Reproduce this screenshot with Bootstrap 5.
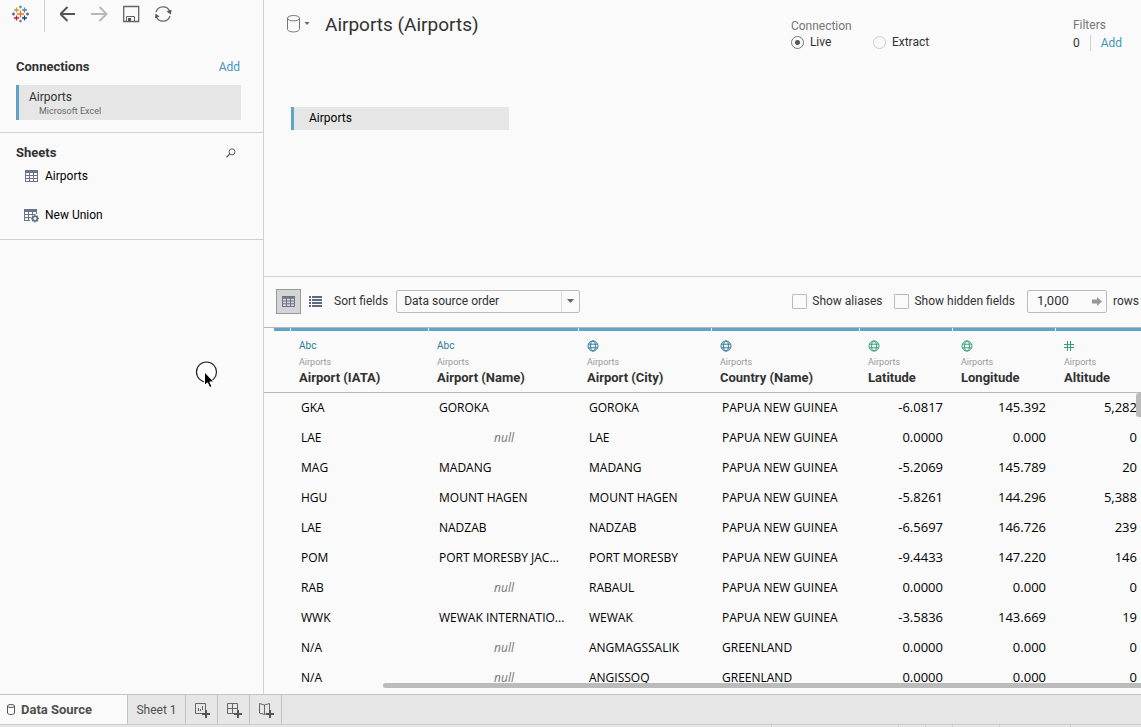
<!DOCTYPE html>
<html lang="en">
<head>
<meta charset="utf-8">
<meta name="viewport" content="width=device-width, initial-scale=1">
<title>Airports (Airports) - Data Source</title>
<link href="https://cdn.jsdelivr.net/npm/bootstrap@5.3.0/dist/css/bootstrap.min.css" rel="stylesheet">
<style>
  :root { --line: #d0d0d0; --accent: #5fa4c7; --ink: #323232; }
  body { font-family: Roboto, "Liberation Sans", sans-serif; font-size: 12px; line-height: 16px; color: var(--ink); background: #fafafa; }
  svg { display: block; flex: none; }
  a { color: #4996b8; text-decoration: none; }
  h1 { font-size: 19px; line-height: 24px; font-weight: 400; margin-left: 15px; }
  h2 { font-size: 13px; line-height: 16px; font-weight: 700; }
  .plain-btn { border: 0; padding: 0; background: none; color: #5c5c5c; line-height: 16px; }
  .rule { border-color: var(--line) !important; }

  .side { width: 264px; flex: none; border-right: 1px solid var(--line); }
  .side-tools { height: 32px; padding-left: 12px; gap: 15px; }
  .brand { width: 33px; height: 32px; border-right: 1px solid var(--line); padding-top: 5px; }
  .side-tools .plain-btn { padding-top: 5px; }
  .side-conn { padding: 27px 22px 12px 16px; }
  .conn-title { margin-bottom: 10px; padding-right: 1px; }
  .conn { border: 0; border-left: 3px solid var(--accent); background: #e6e6e6; height: 35px; padding: 4px 10px; text-align: left; font-size: 12px; color: var(--ink); }
  .conn-kind { font-size: 9px; line-height: 12px; color: #666; padding-left: 10px; }
  .side-sheets { padding: 12px 27px 16px 16px; }
  .sheet-list { gap: 23px; margin-top: 7px; }
  .sheet-item { color: #000; gap: 7px; font-size: 12px; padding: 0 0 0 9px; }

  .canvas-pane { height: 277px; flex: none; }
  .canvas-head { padding: 13px 19px 0 22px; }
  .source-btn { margin-top: 2px; }
  .sheet-pill { width: 218px; height: 23px; margin: 56px 0 0 27px; border-left: 3px solid var(--accent); background: #e6e6e6; padding: 3px 15px; color: #000; }
  .opt { margin-top: 5px; }
  .opt legend { font-size: 12px; line-height: 16px; }
  .opt-row > div { gap: 6px; min-width: 82px; }
  .opt .form-check-input { width: 13px; height: 13px; margin: 0; background-color: #fafafa; border-color: #ccc; box-shadow: none; }
  .opt .form-check-input:checked { border-color: #777; background-image: radial-gradient(circle, #555 2px, transparent 3px); }
  .soft { color: #767676; }
  .filters { margin-left: 118px; padding-top: 4px; }
  .filter-row { padding-top: 2px; }
  .filter-add { border-left: 1px solid var(--line); padding-left: 10px; margin-left: 10px; }

  .grid-tools { height: 51px; flex: none; padding: 0 2px 2px 12px; border-bottom: 1px solid #b8b8b8; }
  .view-btn { width: 25px; height: 25px; display: grid; place-items: center; margin-right: 8px; }
  .view-btn.active { border: 1px solid #999; background: #d4d4d4; }
  .sort-label { margin: 0 8px 0 12px; }
  .sorter { width: 184px; height: 23px; font-size: 12px; line-height: 16px; color: var(--ink); padding: 2px 24px 2px 7px; border: 1px solid #bbb; border-radius: 2px;
    background: linear-gradient(#ddd, #ddd) right 17px top / 1px 100% no-repeat,
      url("data:image/svg+xml,%3Csvg xmlns='http://www.w3.org/2000/svg' viewBox='0 0 7 4'%3E%3Cpath d='M0 0h7L3.5 4z' fill='%23666'/%3E%3C/svg%3E") right 5px center / 7px 4px no-repeat; }
  .tick { gap: 5px; margin-right: 12px; }
  .tick .form-check-input { width: 15px; height: 15px; margin: 0; border: 1px solid #bbb; border-radius: 1px; background-color: #fafafa; }
  .row-count { width: 80px; height: 23px; border: 1px solid #bbb; border-radius: 2px; }
  .row-count input { width: 54px; border: 0; padding: 0 0 0 9px; background: none; font-size: 13px; line-height: 16px; color: var(--ink); }
  .rows-label { margin-left: 6px; }

  .min-0 { min-width: 0; min-height: 0; }
  .airports { width: 873px; margin: 0 0 0 10px; table-layout: fixed; border-collapse: separate; border-spacing: 0; font-family: "Open Sans", "Noto Sans", sans-serif; color: #000; }
  .c-edge { width: 17px; } .c-iata { width: 138px; } .c-name { width: 150px; } .c-city { width: 133px; }
  .c-country { width: 148px; } .c-lat { width: 93px; } .c-lon { width: 103px; } .c-alt { width: 91px; }
  .airports th { font-family: Roboto, sans-serif; height: 65px; padding: 0; vertical-align: top; color: var(--ink); font-weight: 700; font-size: 13px; }
  .airports th::before { content: ""; display: block; height: 3px; background: var(--accent); margin-right: 1px; }
  .airports td { height: 30px; padding: 0 10px; white-space: nowrap; overflow: hidden; font-size: 12px; }
  .airports td.num { text-align: right; font-size: 13px; padding-bottom: 2px; }
  .airports td.none { text-align: center; font-style: italic; color: #777; }
  .field { padding: 7px 0 0 8px; white-space: nowrap; }
  .kind { height: 16px; font-size: 10px; line-height: 16px; font-weight: 400; display: flex; align-items: center; }
  .origin { display: block; font-size: 9px; line-height: 16px; font-weight: 400; color: #999; }
  .dim { color: #2e7a9c; } .meas { color: #35a077; }
  .head-rule { left: 0; right: 0; top: 64px; border-top: 1px solid #b8b8b8; }
  .thumb { background: #bbb; border-radius: 3px 0 0 3px; }
  .thumb-x { left: 119px; right: 0; bottom: 6px; height: 5px; }
  .thumb-y { right: 0; top: 65px; width: 5px; height: 24px; }

  .tabs { height: 31px; flex: none; background: #e6e6e6; border-top: 1px solid #c4c4c4; border-bottom: 1px solid #ccc; }
  .tabs .plain-btn { border-right: 1px solid #c4c4c4; color: #505050; height: 29px; }
  .tabs .tab-now { width: 128px; gap: 6px; background: #fafafa; font-weight: 700; font-size: 13px; padding-left: 7px; }
  .tab-sheet { width: 58px; }
  .tab-new { width: 32px; display: grid; place-items: center; }
  .status { height: 2px; flex: none; background: #e6e6e6; }
  .status span { border-left: 1px solid #ccc; width: 71px; }
  .status .w-s { width: 27px; } .status .w-m { width: 47px; } .status .w-l { width: 127px; }

  .pointer { left: 195px; top: 360px; }
</style>
</head>
<body class="d-flex flex-column vh-100 overflow-hidden">

<svg class="d-none" xmlns="http://www.w3.org/2000/svg">
  <symbol id="i-globe" viewBox="0 0 12 12"><g fill="none" stroke="currentColor"><circle cx="6" cy="6" r="5"/><ellipse cx="6" cy="6" rx="2.4" ry="5"/><path d="M1.4 4.2h9.2M1.4 7.8h9.2"/></g></symbol>
  <symbol id="i-table" viewBox="0 0 13 12"><path fill="#6b748a" fill-rule="evenodd" d="M0 0h13v12H0zM1 3v2h3V3zM5 3v2h3V3zM9 3v2h3V3zM1 6v2h3V6zM5 6v2h3V6zM9 6v2h3V6zM1 9v2h3V9zM5 9v2h3V9zM9 9v2h3V9z"/></symbol>
</svg>

<div class="d-flex flex-grow-1 position-relative min-0">
  <aside class="side">
    <div class="side-tools d-flex align-items-start">
      <div class="brand">
        <svg width="17" height="18" viewBox="0 0 17 18" fill="none" stroke-width="1.3">
          <path stroke="#e8762d" d="M8.500 5.500v7M5 9h7"/>
          <path stroke="#eb912c" d="M4.500 2.500v5M2 5h5"/>
          <path stroke="#59879b" d="M12.500 2.500v5M10 5h5"/>
          <path stroke="#c72037" d="M4.500 10.500v5M2 13h5"/>
          <path stroke="#1f447e" d="M12.500 10.500v5M10 13h5"/>
          <path stroke="#7099a6" d="M8.500 .5v3M7 2h3M8.500 14.500v3M7 16h3"/>
          <path stroke="#5b6591" d="M1.500 7.500v3M0 9h3M15.500 7.500v3M14 9h3"/>
        </svg>
      </div>
      <button class="plain-btn" aria-label="Back"><svg width="16" height="18" viewBox="0 0 16 18" fill="none" stroke="#555" stroke-width="2"><path d="M1 9h14M7.500 2l-7 7 7 7"/></svg></button>
      <button class="plain-btn" aria-label="Forward"><svg width="17" height="18" viewBox="0 0 17 18" fill="none" stroke="#b8b8b8" stroke-width="2"><path d="M0 9h16M8.500 2l7 7-7 7"/></svg></button>
      <button class="plain-btn" aria-label="Save"><svg width="17" height="18" viewBox="0 0 17 18" fill="none" stroke="#666"><path stroke-width="1.3" d="M.7 1.500h15v15H.7z"/><path d="M3.500 16v-4.500h8V16"/><path fill="#555" stroke="none" d="M5 13h3v3H5z"/></svg></button>
      <button class="plain-btn" aria-label="Refresh"><svg width="17" height="18" viewBox="1 0 17 18" fill="none" stroke="#666" stroke-width="1.200"><path d="M2 7a7.300 7.300 0 0 1 13.800-.5M16 11a7.300 7.300 0 0 1-13.800.5"/><path fill="#555" stroke="none" d="M12.500 6.500l5-1.700-.6 4.700zM5.500 11.500l-4.500 1.700.6-4.700z"/></svg></button>
    </div>

    <section class="side-conn border-bottom rule">
      <div class="conn-title d-flex justify-content-between">
        <h2 class="mb-0">Connections</h2>
        <a href="#">Add</a>
      </div>
      <button class="conn d-block w-100">
        <span class="d-block">Airports</span>
        <span class="conn-kind d-block">Microsoft Excel</span>
      </button>
    </section>

    <section class="side-sheets border-bottom rule">
      <div class="d-flex justify-content-between align-items-center">
        <h2 class="mb-0">Sheets</h2>
        <button class="plain-btn" aria-label="Search sheets"><svg width="10" height="10" viewBox="0 0 10 10" fill="none" stroke="currentColor"><circle cx="6" cy="3.800" r="3"/><path stroke-width="1.300" d="M3.800 6L.5 9.400"/></svg></button>
      </div>
      <div class="sheet-list d-flex flex-column">
        <button class="plain-btn sheet-item d-flex align-items-center">
          <svg width="13" height="12"><use href="#i-table"/></svg>Airports
        </button>
        <button class="plain-btn sheet-item d-flex align-items-center">
          <svg class="overflow-visible" width="13" height="14" viewBox="1 0 13 14"><path fill="#6b748a" fill-rule="evenodd" d="M0 1h13v5h-1V4H9v2h2v1H7v3H6v3H0zM1 4v2h3V4zM5 4v2h3V4zM1 7v2h3V7zM5 7v2h2V7zM1 10v2h3v-2zM5 10v2h1v-2z"/><circle cx="11" cy="10.500" r="2.300" fill="#fafafa" stroke="#5b7180" stroke-width="1.600"/><path stroke="#5b7180" stroke-width="1.300" d="M11 6.500V8M11 13v1.500M7 10.500h1.500M13.500 10.500H15M8.200 7.700l1 1M12.800 12.300l1 1M13.800 7.700l-1 1M9.200 12.300l-1 1"/></svg>New Union
        </button>
      </div>
    </section>
  </aside>

  <main class="d-flex flex-column flex-grow-1 min-0">
    <section class="canvas-pane border-bottom rule">
      <header class="canvas-head d-flex align-items-start">
        <button class="plain-btn source-btn d-flex align-items-center gap-1" aria-label="Data source menu">
          <svg width="14" height="18" viewBox="0 0 14 18" fill="none" stroke="#777"><ellipse cx="7.500" cy="3.200" rx="6" ry="2.700"/><path d="M1.500 3.200v11c0 1.500 2.500 2.700 6 2.700s6-1.200 6-2.700v-11"/></svg>
          <svg width="6" height="4" viewBox="0 0 6 4" fill="#666"><path d="M.5 0h5L3 3z"/></svg>
        </button>
        <h1 class="mb-0">Airports (Airports)</h1>
        <fieldset class="opt ms-auto">
          <legend class="soft mb-0">Connection</legend>
          <div class="opt-row d-flex">
            <div class="d-flex align-items-center"><input class="form-check-input" type="radio" name="mode" id="live" checked><label for="live">Live</label></div>
            <div class="d-flex align-items-center"><input class="form-check-input" type="radio" name="mode" id="extract"><label for="extract">Extract</label></div>
          </div>
        </fieldset>
        <div class="filters">
          <div class="soft">Filters</div>
          <div class="filter-row d-flex"><span>0</span><a href="#" class="filter-add">Add</a></div>
        </div>
      </header>
      <div class="sheet-pill">Airports</div>
    </section>

    <section class="grid-tools d-flex align-items-center">
      <button class="plain-btn view-btn active" aria-label="Preview data"><svg width="13" height="11" viewBox="0 0 13 12" preserveAspectRatio="none"><use href="#i-table"/></svg></button>
      <button class="plain-btn" aria-label="Manage metadata"><svg width="13" height="11" viewBox="0 0 13 11" fill="#5e687e"><path d="M0 0h2v2H0zM3 0h10v2H3zM0 3h2v2H0zM3 3h10v2H3zM0 6h2v2H0zM3 6h10v2H3zM0 9h2v2H0zM3 9h10v2H3z"/></svg></button>
      <label class="sort-label" for="sort">Sort fields</label>
      <select id="sort" class="form-select sorter"><option>Data source order</option></select>
      <div class="tick d-flex align-items-center ms-auto"><input class="form-check-input" type="checkbox" id="aliases"><label for="aliases">Show aliases</label></div>
      <div class="tick d-flex align-items-center"><input class="form-check-input" type="checkbox" id="hidden"><label for="hidden">Show hidden fields</label></div>
      <div class="row-count d-flex align-items-center justify-content-between pe-1">
        <input type="text" id="rows" value="1,000">
        <svg width="10" height="9" viewBox="0 0 10 9" fill="#999"><path d="M0 2.500h5V0l5 4.500L5 9V6.500H0z"/></svg>
      </div>
      <label class="rows-label" for="rows">rows</label>
    </section>

    <section class="flex-grow-1 overflow-hidden position-relative min-0">
      <table class="airports">
        <colgroup><col class="c-edge"><col class="c-iata"><col class="c-name"><col class="c-city"><col class="c-country"><col class="c-lat"><col class="c-lon"><col class="c-alt"></colgroup>
        <thead>
          <tr>
            <th></th>
            <th><div class="field"><span class="kind dim">Abc</span><span class="origin">Airports</span>Airport (IATA)</div></th>
            <th><div class="field"><span class="kind dim">Abc</span><span class="origin">Airports</span>Airport (Name)</div></th>
            <th><div class="field"><span class="kind dim"><svg width="12" height="12"><use href="#i-globe"/></svg></span><span class="origin">Airports</span>Airport (City)</div></th>
            <th><div class="field"><span class="kind dim"><svg width="12" height="12"><use href="#i-globe"/></svg></span><span class="origin">Airports</span>Country (Name)</div></th>
            <th><div class="field"><span class="kind meas"><svg width="12" height="12"><use href="#i-globe"/></svg></span><span class="origin">Airports</span>Latitude</div></th>
            <th><div class="field"><span class="kind meas"><svg width="12" height="12"><use href="#i-globe"/></svg></span><span class="origin">Airports</span>Longitude</div></th>
            <th><div class="field"><span class="kind meas"><svg width="10" height="10" viewBox="0 0 10 10" fill="none" stroke="currentColor"><path d="M3.500 0v10M6.500 0v10M0 3.500h10M0 6.500h10"/></svg></span><span class="origin">Airports</span>Altitude</div></th>
          </tr>
        </thead>
        <tbody>
          <tr><td></td><td>GKA</td><td>GOROKA</td><td>GOROKA</td><td>PAPUA NEW GUINEA</td><td class="num">-6.0817</td><td class="num">145.392</td><td class="num">5,282</td></tr>
          <tr><td></td><td>LAE</td><td class="none">null</td><td>LAE</td><td>PAPUA NEW GUINEA</td><td class="num">0.0000</td><td class="num">0.000</td><td class="num">0</td></tr>
          <tr><td></td><td>MAG</td><td>MADANG</td><td>MADANG</td><td>PAPUA NEW GUINEA</td><td class="num">-5.2069</td><td class="num">145.789</td><td class="num">20</td></tr>
          <tr><td></td><td>HGU</td><td>MOUNT HAGEN</td><td>MOUNT HAGEN</td><td>PAPUA NEW GUINEA</td><td class="num">-5.8261</td><td class="num">144.296</td><td class="num">5,388</td></tr>
          <tr><td></td><td>LAE</td><td>NADZAB</td><td>NADZAB</td><td>PAPUA NEW GUINEA</td><td class="num">-6.5697</td><td class="num">146.726</td><td class="num">239</td></tr>
          <tr><td></td><td>POM</td><td>PORT MORESBY JAC...</td><td>PORT MORESBY</td><td>PAPUA NEW GUINEA</td><td class="num">-9.4433</td><td class="num">147.220</td><td class="num">146</td></tr>
          <tr><td></td><td>RAB</td><td class="none">null</td><td>RABAUL</td><td>PAPUA NEW GUINEA</td><td class="num">0.0000</td><td class="num">0.000</td><td class="num">0</td></tr>
          <tr><td></td><td>WWK</td><td>WEWAK INTERNATIO...</td><td>WEWAK</td><td>PAPUA NEW GUINEA</td><td class="num">-3.5836</td><td class="num">143.669</td><td class="num">19</td></tr>
          <tr><td></td><td>N/A</td><td class="none">null</td><td>ANGMAGSSALIK</td><td>GREENLAND</td><td class="num">0.0000</td><td class="num">0.000</td><td class="num">0</td></tr>
          <tr><td></td><td>N/A</td><td class="none">null</td><td>ANGISSOQ</td><td>GREENLAND</td><td class="num">0.0000</td><td class="num">0.000</td><td class="num">0</td></tr>
        </tbody>
      </table>
      <div class="head-rule position-absolute"></div>
      <div class="thumb thumb-x position-absolute"></div>
      <div class="thumb thumb-y position-absolute"></div>
    </section>
  </main>

  <svg class="pointer position-absolute" width="24" height="30" viewBox="0 0 24 30"><circle cx="11.500" cy="12" r="10" fill="#fff" stroke="#222" stroke-width="1.200"/><path d="M9.500 12v13.500l3-2.700 2.200 4.700 2.300-1-2.200-4.600h4.200z" fill="#000" stroke="#fff"/></svg>
</div>

<nav class="tabs d-flex" aria-label="Sheets">
  <button class="plain-btn tab-now d-flex align-items-center"><svg width="8" height="11" viewBox="0 0 8 11" fill="none" stroke="#555"><ellipse cx="4" cy="2" rx="3.500" ry="1.500"/><path d="M.5 2v7c0 .8 1.500 1.500 3.500 1.500s3.500-.7 3.500-1.500V2"/></svg>Data Source</button>
  <button class="plain-btn tab-sheet">Sheet 1</button>
  <button class="plain-btn tab-new" aria-label="New worksheet"><svg width="16" height="16" viewBox="0 0 16 16" fill="none" stroke="#666"><path d="M8 11.500H1.500V1.500h10V8M4.500 6v3M6.500 7v2M8.500 4v4"/><path stroke="#555" stroke-width="2" d="M12 8v8M8 12h8"/></svg></button>
  <button class="plain-btn tab-new" aria-label="New dashboard"><svg width="16" height="16" viewBox="0 0 16 16" fill="none" stroke="#666"><path d="M8 11.500H1.500V1.500h10V8M6.500 1.500v10M1.500 6.500h10"/><path stroke="#555" stroke-width="2" d="M12 8v8M8 12h8"/></svg></button>
  <button class="plain-btn tab-new" aria-label="New story"><svg width="16" height="16" viewBox="0 0 16 16" fill="none" stroke="#666"><path d="M6.500 12.500V3L1.500 1.500V11l5 1.500 2-.8M6.500 3l5-1.500V8"/><path stroke="#555" stroke-width="2" d="M12 8v8M8 12h8"/></svg></button>
</nav>
<footer class="status d-flex justify-content-end">
  <span class="w-l"></span><span class="w-s"></span><span class="w-s"></span><span class="w-m"></span><span></span><span></span>
</footer>

<script src="https://cdn.jsdelivr.net/npm/bootstrap@5.3.0/dist/js/bootstrap.bundle.min.js"></script>
</body>
</html>
